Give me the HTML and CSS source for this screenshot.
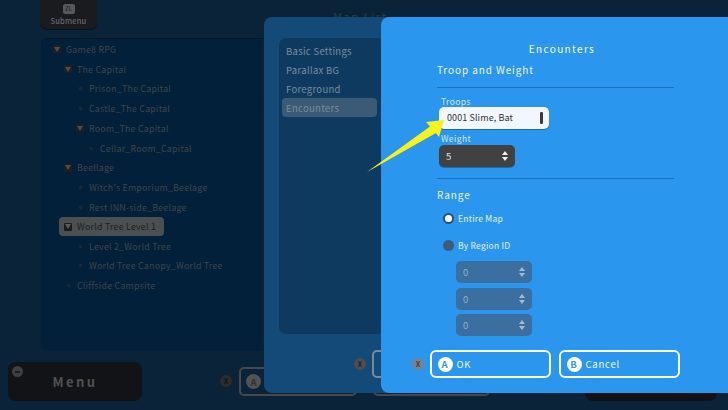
FILE: index.html
```html
<!DOCTYPE html>
<html lang="en">
<head>
<meta charset="utf-8">
<title>Encounters</title>
<link rel="stylesheet" href="styles.css">
</head>
<body>
<div class="stage">
  <div class="submenu"><span class="zl">ZL</span><span>Submenu</span></div>
  <div class="map-title">Map List</div>
  <div class="tree">
    <div class="node lv0"><i class="tri"></i>Game8 RPG</div>
    <div class="node lv1"><i class="tri"></i>The Capital</div>
    <div class="node lv2"><i class="dot"></i>Prison_The Capital</div>
    <div class="node lv2"><i class="dot"></i>Castle_The Capital</div>
    <div class="node lv2"><i class="tri"></i>Room_The Capital</div>
    <div class="node lv3"><i class="dot"></i>Cellar_Room_Capital</div>
    <div class="node lv1"><i class="tri"></i>Beellage</div>
    <div class="node lv2"><i class="dot"></i>Witch's Emporium_Beelage</div>
    <div class="node lv2"><i class="dot"></i>Rest INN-side_Beelage</div>
    <div class="node lv1 selected"><i class="tri"></i>World Tree Level 1</div>
    <div class="node lv2"><i class="dot"></i>Level 2_World Tree</div>
    <div class="node lv2"><i class="dot"></i>World Tree Canopy_World Tree</div>
    <div class="node lv1"><i class="dot"></i>Cliffside Campsite</div>
  </div>
  <div class="menu-btn"><span class="minus"></span>Menu</div>
  <div class="bottom-x"><span class="x dark">X</span></div>
  <div class="bottom-a"><span class="round dim">A</span></div>
  <div class="bottom-b"></div>
  <div class="bottom-right"></div>

  <div class="win-mid">
    <div class="side">
      <div class="side-item">Basic Settings</div>
      <div class="side-item">Parallax BG</div>
      <div class="side-item">Foreground</div>
      <div class="side-item current">Encounters</div>
    </div>
    <span class="x mid-x">X</span>
    <span class="mid-btn"></span>
  </div>

  <div class="win-front">
    <h1 class="title">Encounters</h1>
    <div class="form">
      <h2 class="sec sec-first">Troop and Weight</h2>
      <hr class="rule">
      <label class="lbl lbl-first">Troops</label>
      <div class="select">0001 Slime, Bat<i class="bar"></i></div>
      <label class="lbl lbl-second">Weight</label>
      <div class="spin"><span>5</span><span class="arrows"><i class="up"></i><i class="down"></i></span></div>
      <hr class="rule rule-second">
      <h2 class="sec sec-range">Range</h2>
      <div class="radio-row first-radio"><i class="radio on"></i>Entire Map</div>
      <div class="radio-row second-radio"><i class="radio"></i>By Region ID</div>
      <div class="regions">
        <div class="spin off"><span>0</span><span class="arrows"><i class="up"></i><i class="down"></i></span></div>
        <div class="spin off"><span>0</span><span class="arrows"><i class="up"></i><i class="down"></i></span></div>
        <div class="spin off"><span>0</span><span class="arrows"><i class="up"></i><i class="down"></i></span></div>
      </div>
    </div>
    <div class="actions">
      <span class="x light">X</span>
      <div class="btn"><span class="round">A</span>OK</div>
      <div class="btn"><span class="round">B</span>Cancel</div>
    </div>
  </div>

  <svg class="arrow" width="728" height="410" viewBox="0 0 728 410" aria-hidden="true">
    <polygon points="367,172 430,126.5 426,122 444,120 439,137 436,133" fill="#f6f21a"/>
  </svg>
</div>
</body>
</html>
```
FILE: styles.css
```css
* { box-sizing: border-box; }
html, body { margin: 0; padding: 0; }
body { width: 728px; height: 410px; overflow: hidden; background: #0a2339; font-family: "Noto Sans CJK JP", "Noto Sans", sans-serif; }
.stage { position: relative; width: 728px; height: 410px; overflow: hidden; background: #0a2339; }

.submenu { position: absolute; left: 40px; top: -6px; width: 57px; height: 35px; background: #191b1e; border-radius: 7px; display: flex; flex-direction: column; align-items: center; justify-content: flex-end; padding-bottom: 3px; color: #64686a; font-size: 7.5px; font-weight: 500; letter-spacing: .2px; line-height: 11px; box-shadow: 0 1px 0 #0c1219; }
.zl { display: flex; align-items: center; justify-content: center; width: 12px; height: 10px; margin-bottom: 1px; border-radius: 2px; background: #55595b; color: #24282b; font-size: 6px; line-height: 10px; letter-spacing: 0; }
.map-title { position: absolute; left: 333px; top: 8px; color: #38393a; font-size: 11px; letter-spacing: 1.5px; line-height: 16px; }

.tree { position: absolute; left: 41px; top: 39px; width: 300px; height: 312px; padding-top: .5px; background: #02203a; border-radius: 6px; display: flex; flex-direction: column; align-items: flex-start; box-shadow: 0 -1px 0 #0a1826; }
.node { display: flex; align-items: center; height: 19.75px; color: #3f4548; font-size: 8.8px; letter-spacing: .25px; white-space: nowrap; }
.lv0 { margin-left: 12px; }
.lv1 { margin-left: 23px; }
.lv2 { margin-left: 35px; }
.lv3 { margin-left: 46px; }
.node i { flex: none; }
.tri { display: block; width: 8px; height: 8px; margin-right: 5px; background: #1d1f20; position: relative; border-radius: 1px; }
.tri::after { content: ""; position: absolute; left: 1px; top: 1.5px; border-left: 3px solid transparent; border-right: 3px solid transparent; border-top: 5px solid #4d4d4a; }
.dot { display: block; width: 3px; height: 3px; margin: 0 7.5px 0 2.5px; background: #1a2630; }
.selected { margin-left: 18px; padding: 0 7px 0 5px; width: 105px; height: 19px; background: #4b4f4f; border-radius: 4px; color: #1d1f20; }
.selected .tri { background: #1a1c1d; }
.selected .tri::after { border-top-color: #5a5d5c; }

.menu-btn { position: absolute; left: 8px; top: 362px; width: 134px; height: 39px; background: #111316; border-radius: 8px; display: flex; align-items: center; justify-content: center; color: #515151; font-size: 13px; font-weight: 700; letter-spacing: 2.4px; }
.minus { position: absolute; left: 4px; top: 4px; width: 11px; height: 11px; border-radius: 50%; background: #3d4042; }
.minus::after { content: ""; position: absolute; left: 3px; top: 5px; width: 5px; height: 1.5px; background: #1a1c1e; }

.x { display: flex; align-items: center; justify-content: center; width: 12px; height: 12px; border-radius: 50%; font-size: 7px; font-weight: 700; line-height: 12px; }
.bottom-x { position: absolute; left: 220px; top: 375px; }
.dark { background: #2b2c2b; color: #151515; }
.bottom-a { position: absolute; left: 239px; top: 367px; width: 118px; height: 29px; border: 2px solid #47484a; border-radius: 5px; padding-left: 5px; display: flex; align-items: center; }
.bottom-b { position: absolute; left: 373px; top: 367px; width: 117px; height: 29px; border: 2px solid #47484a; border-radius: 5px; }
.bottom-right { position: absolute; left: 585px; top: 370px; width: 132px; height: 31px; background: #111316; border-radius: 8px; }
.round { flex: none; display: flex; align-items: center; justify-content: center; width: 15px; height: 15px; border-radius: 50%; background: #fff; color: #2a96ee; font-size: 9.5px; font-weight: 700; margin-right: 4px; }
.dim { background: #525353; color: #2f3031; }

.win-mid { position: absolute; left: 264px; top: 17px; width: 200px; height: 376px; background: #144a78; border-radius: 8px; }
.side { position: absolute; left: 15px; top: 21px; width: 105px; height: 296px; padding: 3px 3px 0; background: #0e3a60; border-radius: 7px; display: flex; flex-direction: column; }
.side-item { width: 95px; height: 19px; padding: 1px 0 0 4px; color: #7a8c9c; font-size: 9.5px; letter-spacing: .3px; line-height: 19px; border-radius: 4px; }
.current { background: #3b5a76; }
.mid-x { position: absolute; left: 90px; top: 341px; background: #4d4f50; color: #232323; }
.mid-btn { position: absolute; left: 108px; top: 333px; width: 30px; height: 28px; border: 2px solid #7a8a98; border-radius: 5px; }

.win-front { position: absolute; left: 381px; top: 17px; width: 360px; height: 376px; background: #2a96ee; border-radius: 8px 0 0 8px; color: #fff; }
.title { margin: 0; position: absolute; left: 0; top: 25px; width: 362px; text-align: center; font-size: 10px; font-weight: 400; letter-spacing: 1.35px; line-height: 14px; }
.form { position: absolute; left: 56px; top: 45px; width: 237px; display: flex; flex-direction: column; align-items: flex-start; }
.sec { margin: 0; font-size: 10px; font-weight: 400; letter-spacing: .9px; line-height: 16px; color: #eaf5fe; }
.rule { width: 237px; height: 1px; margin: 9px 0 0; border: 0; background: #1f72b5; }
.lbl { font-size: 8.5px; letter-spacing: .4px; line-height: 12px; color: #d3e9fb; margin-left: 4px; }
.lbl-first { margin-top: 7px; }
.select { position: relative; margin: 0 0 0 2px; width: 110px; height: 22px; padding-left: 8px; background: #f1f7fd; border-radius: 5px; color: #333; font-size: 9px; letter-spacing: .1px; line-height: 22px; box-shadow: 0 1px 0 #1b6cad; }
.bar { position: absolute; right: 6px; top: 5px; width: 3px; height: 12px; border-radius: 1px; background: #3b3b3b; }
.lbl-second { margin-top: 3px; }
.spin { display: flex; align-items: center; justify-content: space-between; margin: 1px 0 0 2px; width: 76px; height: 22px; padding: 0 7px 0 7px; background: #414141; border-radius: 5px; color: #e2e2e2; font-size: 9.5px; box-shadow: 0 1px 0 #1b6cad; }
.arrows { display: flex; flex-direction: column; gap: 2px; }
.up { display: block; border-left: 3px solid transparent; border-right: 3px solid transparent; border-bottom: 4px solid #f0f0f0; }
.down { display: block; border-left: 3px solid transparent; border-right: 3px solid transparent; border-top: 4px solid #f0f0f0; }
.rule-second { margin-top: 11px; }
.sec-range { margin-top: 8px; }
.radio-row { display: flex; align-items: center; height: 14px; font-size: 8.5px; letter-spacing: .25px; color: #e4f2fd; }
.first-radio { margin: 8px 0 0 6px; }
.second-radio { margin: 13px 0 0 6px; }
.radio { flex: none; width: 11px; height: 11px; margin-right: 4px; border-radius: 50%; background: #3d5c7c; }
.radio.on { background: #fff; border: 2px solid #2e4f71; }
.regions { display: flex; flex-direction: column; gap: 3.5px; margin: 8px 0 0 17px; }
.spin.off { background: #3a6f9f; color: #8fb4d4; box-shadow: none; }
.off .up { border-bottom-color: #9ebcd5; }
.off .down { border-top-color: #9ebcd5; }

.actions { position: absolute; left: 31px; top: 333px; display: flex; align-items: center; gap: 8px; }
.light { margin-right: -2px; background: #7c8287; color: #3c3f42; }
.btn { display: flex; align-items: center; width: 121px; height: 28px; padding-left: 5.5px; border: 2px solid #fff; border-radius: 6px; font-size: 9.5px; font-weight: 400; letter-spacing: .8px; color: #f2f9fe; }

.arrow { position: absolute; left: 0; top: 0; pointer-events: none; }
```
